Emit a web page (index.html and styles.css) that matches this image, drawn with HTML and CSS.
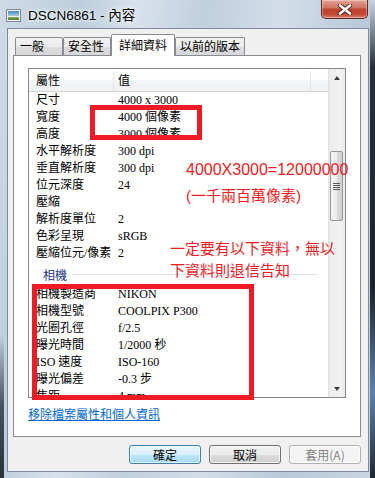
FILE: index.html
```html
<!DOCTYPE html>
<html lang="zh-Hant">
  <head>
    <meta charset="UTF-8" />
    <meta name="viewport" content="width=device-width, initial-scale=1.0" />
    <title>DSCN6861 - 內容</title>
    <link rel="stylesheet" href="styles.css">
  </head>
  <body>
    <div class="window">
      <!-- Title bar -->
      <div class="titlebar">
        <svg class="title-icon" width="15" height="13" viewBox="0 0 15 13">
          <defs>
            <linearGradient id="sky" x1="0" y1="0" x2="0" y2="1">
              <stop offset="0" stop-color="#4b86b8" />
              <stop offset="0.55" stop-color="#a9cbe6" />
              <stop offset="0.56" stop-color="#f4f7f2" />
              <stop offset="0.7" stop-color="#dfe9d6" />
              <stop offset="0.71" stop-color="#7fa35a" />
              <stop offset="1" stop-color="#4f7a32" />
            </linearGradient>
          </defs>
          <rect x="0.5" y="0.5" width="14" height="12" fill="#f3f5f7" stroke="#7d8a96" />
          <rect x="2" y="2" width="11" height="9" fill="url(#sky)" />
        </svg>
        <span class="title-text">DSCN6861 - 內容</span>
        <button class="close-button" aria-label="關閉">
          <svg width="18" height="11" viewBox="0 0 18 11">
            <path d="M4 1.5 L14 9.5 M14 1.5 L4 9.5" stroke="#4a2520" stroke-width="4.4" stroke-linecap="round" />
            <path d="M4 1.5 L14 9.5 M14 1.5 L4 9.5" stroke="#ffffff" stroke-width="2.6" stroke-linecap="round" />
          </svg>
        </button>
      </div>

      <!-- Client area -->
      <div class="client">
        <div class="tabs">
          <div class="tab">一般</div>
          <div class="tab">安全性</div>
          <div class="tab active">詳細資料</div>
          <div class="tab">以前的版本</div>
        </div>

        <div class="tab-panel">
          <div class="listview">
            <div class="list-main">
              <div class="list-header">
                <div class="col-name">屬性</div>
                <div class="col-value">值</div>
                <div class="col-rest"></div>
              </div>
              <div class="list-body">
                <div class="row"><span class="cell-name">尺寸</span><span class="cell-value">4000 x 3000</span></div>
                <div class="row"><span class="cell-name">寬度</span><span class="cell-value">4000 個像素</span></div>
                <div class="row"><span class="cell-name">高度</span><span class="cell-value">3000 個像素</span></div>
                <div class="row"><span class="cell-name">水平解析度</span><span class="cell-value">300 dpi</span></div>
                <div class="row"><span class="cell-name">垂直解析度</span><span class="cell-value">300 dpi</span></div>
                <div class="row"><span class="cell-name">位元深度</span><span class="cell-value">24</span></div>
                <div class="row"><span class="cell-name">壓縮</span><span class="cell-value"></span></div>
                <div class="row"><span class="cell-name">解析度單位</span><span class="cell-value">2</span></div>
                <div class="row"><span class="cell-name">色彩呈現</span><span class="cell-value">sRGB</span></div>
                <div class="row"><span class="cell-name">壓縮位元/像素</span><span class="cell-value">2</span></div>
                <div class="group"><span>相機</span></div>
                <div class="row"><span class="cell-name">相機製造商</span><span class="cell-value">NIKON</span></div>
                <div class="row"><span class="cell-name">相機型號</span><span class="cell-value">COOLPIX P300</span></div>
                <div class="row"><span class="cell-name">光圈孔徑</span><span class="cell-value">f/2.5</span></div>
                <div class="row"><span class="cell-name">曝光時間</span><span class="cell-value">1/2000 秒</span></div>
                <div class="row"><span class="cell-name">ISO 速度</span><span class="cell-value">ISO-160</span></div>
                <div class="row"><span class="cell-name">曝光偏差</span><span class="cell-value">-0.3 步</span></div>
                <div class="row"><span class="cell-name">焦距</span><span class="cell-value">4 mm</span></div>
              </div>
            </div>
            <div class="scrollbar">
              <div class="scroll-btn"><span class="arrow-up"></span></div>
              <div class="scroll-track">
                <div class="thumb"><span class="grip"></span></div>
              </div>
              <div class="scroll-btn"><span class="arrow-down"></span></div>
            </div>
          </div>
          <a class="remove-link" href="#">移除檔案屬性和個人資訊</a>
        </div>

        <div class="buttons">
          <button class="btn btn-default">確定</button>
          <button class="btn">取消</button>
          <button class="btn" disabled>套用(A)</button>
        </div>
      </div>

      <!-- Red annotations drawn over the screenshot -->
      <div class="mark mark-size"></div>
      <div class="mark mark-camera"></div>
      <div class="note note-total">
        4000X3000=12000000<br /><span class="note-cjk">(一千兩百萬像素)</span>
      </div>
      <div class="note note-require">一定要有以下資料，無以<br />下資料則退信告知</div>
    </div>
  </body>
</html>
```

FILE: styles.css
```css
body {
  margin: 0;
  padding: 0;
  font-family: "Liberation Sans", "Noto Sans CJK TC", sans-serif;
  font-size: 12px;
}
.window {
  position: relative;
  width: 375px;
  height: 478px;
  overflow: hidden;
  display: flex;
  flex-direction: column;
  background:
    linear-gradient(#c7d4e1 0%, #27303a 14%, #1b2229 60%, #5d82ac 82%, #1f2832 100%) right top / 5px 100% no-repeat,
    linear-gradient(transparent 70%, #46515d 85%, #2a323b 100%) left top / 4px 100% no-repeat,
    linear-gradient(100deg, #cfdbe7 0%, #bccddd 18%, #d8e2ec 30%, #c0cfde 45%, #d3dee9 62%, #b8c9da 80%, #c9d6e3 100%);
}
.titlebar {
  height: 28px;
  flex-shrink: 0;
  display: flex;
  align-items: center;
  padding: 0 7px 0 6px;
}
.title-icon {
  margin-top: 2px;
}
.title-text {
  margin-left: 7px;
  flex: 1;
  color: #000;
  font-size: 13.5px;
  text-shadow: 0 0 6px #fff, 0 0 3px #fff;
}
.close-button {
  align-self: flex-start;
  width: 47px;
  height: 19px;
  padding: 0;
  border: 1px solid #5b2a26;
  border-top: none;
  border-radius: 0 0 5px 5px;
  background: linear-gradient(#e4a597 0%, #d0705f 45%, #c0412f 50%, #c24a36 80%, #d6826d 100%);
  box-shadow: inset 0 0 0 1px rgba(255, 255, 255, 0.35);
  display: flex;
  align-items: center;
  justify-content: center;
}
.client {
  box-sizing: border-box;
  width: 362px;
  height: 444px;
  margin-left: 7px;
  border: 1px solid #7e8a97;
  background-color: #f0f0f0;
  padding: 5px 7px 7px 5px;
  display: flex;
  flex-direction: column;
  font-family: "Noto Sans CJK TC", sans-serif;
}
.tabs {
  height: 21px;
  display: flex;
  align-items: flex-end;
  padding-left: 2px;
}
.tab {
  box-sizing: border-box;
  min-width: 48px;
  height: 18px;
  padding: 0 4px;
  border: 1px solid #898c95;
  border-bottom: none;
  border-radius: 2px 2px 0 0;
  background: linear-gradient(#f3f3f3, #ebebeb 50%, #dddddd 51%, #d7d7d7);
  line-height: 16px;
  font-size: 12px;
  color: #000;
}
.tab.active {
  position: relative;
  z-index: 1;
  height: 22px;
  margin-bottom: -1px;
  padding: 0 7px;
  background: #fff;
  line-height: 19px;
}
.tab-panel {
  box-sizing: border-box;
  width: 348px;
  height: 382px;
  border: 1px solid #898c95;
  background-color: #fff;
  padding: 12px 14px 0 14px;
}
.listview {
  box-sizing: border-box;
  height: 330px;
  border: 1px solid #828790;
  display: flex;
  font-family: "Liberation Serif", "Noto Sans CJK TC", serif;
  font-size: 12px;
  color: #000;
}
.list-main {
  flex: 1;
  overflow: hidden;
}
.list-header {
  box-sizing: border-box;
  height: 23px;
  padding-top: 2px;
  display: flex;
  line-height: 20px;
  border-bottom: 1px solid #d5d5d5;
  background: linear-gradient(#ffffff 0%, #ffffff 45%, #f4f5f7 55%, #eff0f2 100%);
}
.col-name {
  box-sizing: border-box;
  width: 85px;
  padding-left: 7px;
  border-right: 1px solid #e3e5e8;
}
.col-value {
  box-sizing: border-box;
  width: 197px;
  padding-left: 4px;
  border-right: 1px solid #e3e5e8;
}
.list-body {
  height: 305px;
  overflow: hidden;
}
.row {
  display: flex;
  height: 17px;
  line-height: 17px;
  white-space: nowrap;
}
.cell-name {
  box-sizing: border-box;
  width: 85px;
  padding-left: 7px;
}
.cell-value {
  padding-left: 4px;
}
.group {
  height: 24px;
  display: flex;
  align-items: center;
  padding: 0 10px 0 14px;
  color: #1e3287;
  font-family: "Noto Sans CJK TC", sans-serif;
}
.group::after {
  content: "";
  flex: 1;
  margin-left: 5px;
  border-top: 1px solid #dde1e8;
}
.scrollbar {
  width: 17px;
  display: flex;
  flex-direction: column;
  background: linear-gradient(90deg, #e0e0e0 0%, #eeeeee 15%, #f2f2f2 70%, #e9e9e9 100%);
}
.scroll-btn {
  height: 17px;
  display: flex;
  align-items: center;
  justify-content: center;
}
.arrow-up {
  border-left: 3.5px solid transparent;
  border-right: 3.5px solid transparent;
  border-bottom: 4px solid #3d3d3d;
}
.arrow-down {
  border-left: 3.5px solid transparent;
  border-right: 3.5px solid transparent;
  border-top: 4px solid #3d3d3d;
}
.scroll-track {
  flex: 1;
  padding-top: 65px;
}
.thumb {
  box-sizing: border-box;
  width: 13px;
  height: 70px;
  margin-left: 2px;
  border: 1px solid #979797;
  border-radius: 2px;
  background: linear-gradient(90deg, #f6f6f6 0%, #ececec 50%, #dcdcdc 51%, #d0d0d0 100%);
  display: flex;
  align-items: center;
  justify-content: center;
}
.grip {
  width: 7px;
  height: 7px;
  background: repeating-linear-gradient(#5b5b5b 0, #5b5b5b 1px, transparent 1px, transparent 2px);
}
.remove-link {
  display: inline-block;
  margin-top: 8px;
  line-height: 16px;
  font-size: 12px;
  color: #0066cc;
  text-decoration: underline;
}
.buttons {
  display: flex;
  justify-content: flex-end;
  gap: 8px;
  margin-top: 8px;
}
.btn {
  box-sizing: border-box;
  width: 72px;
  height: 19px;
  padding: 0;
  border: 1px solid #707070;
  border-radius: 3px;
  background: linear-gradient(#f2f2f2, #ebebeb 50%, #dddddd 51%, #cfcfcf);
  box-shadow: inset 0 0 0 1px rgba(255, 255, 255, 0.7);
  font-family: "Noto Sans CJK TC", sans-serif;
  font-size: 12px;
  line-height: 16px;
  color: #000;
}
.btn-default {
  border-color: #3c7fb1;
  background: linear-gradient(#eaf6fd, #d9f0fc 50%, #bee6fd 51%, #a7d9f5);
}
.btn:disabled {
  border-color: #adb2b5;
  background: #f4f4f4;
  color: #838383;
}
.mark {
  position: absolute;
  box-sizing: border-box;
  border: 5px solid #ed1c24;
  z-index: 5;
}
.mark-size {
  left: 90px;
  top: 105px;
  width: 112px;
  height: 35px;
}
.mark-camera {
  left: 32px;
  top: 284px;
  width: 222px;
  height: 116px;
}
.note {
  position: absolute;
  z-index: 5;
  color: #ed1c24;
  white-space: nowrap;
}
.note-total {
  left: 186px;
  top: 157px;
  font-size: 16px;
  line-height: 26px;
}
.note-cjk {
  font-size: 15px;
}
.note-require {
  left: 170px;
  top: 237px;
  font-size: 15px;
  line-height: 22px;
  font-family: "Noto Sans CJK TC", sans-serif;
}
```
